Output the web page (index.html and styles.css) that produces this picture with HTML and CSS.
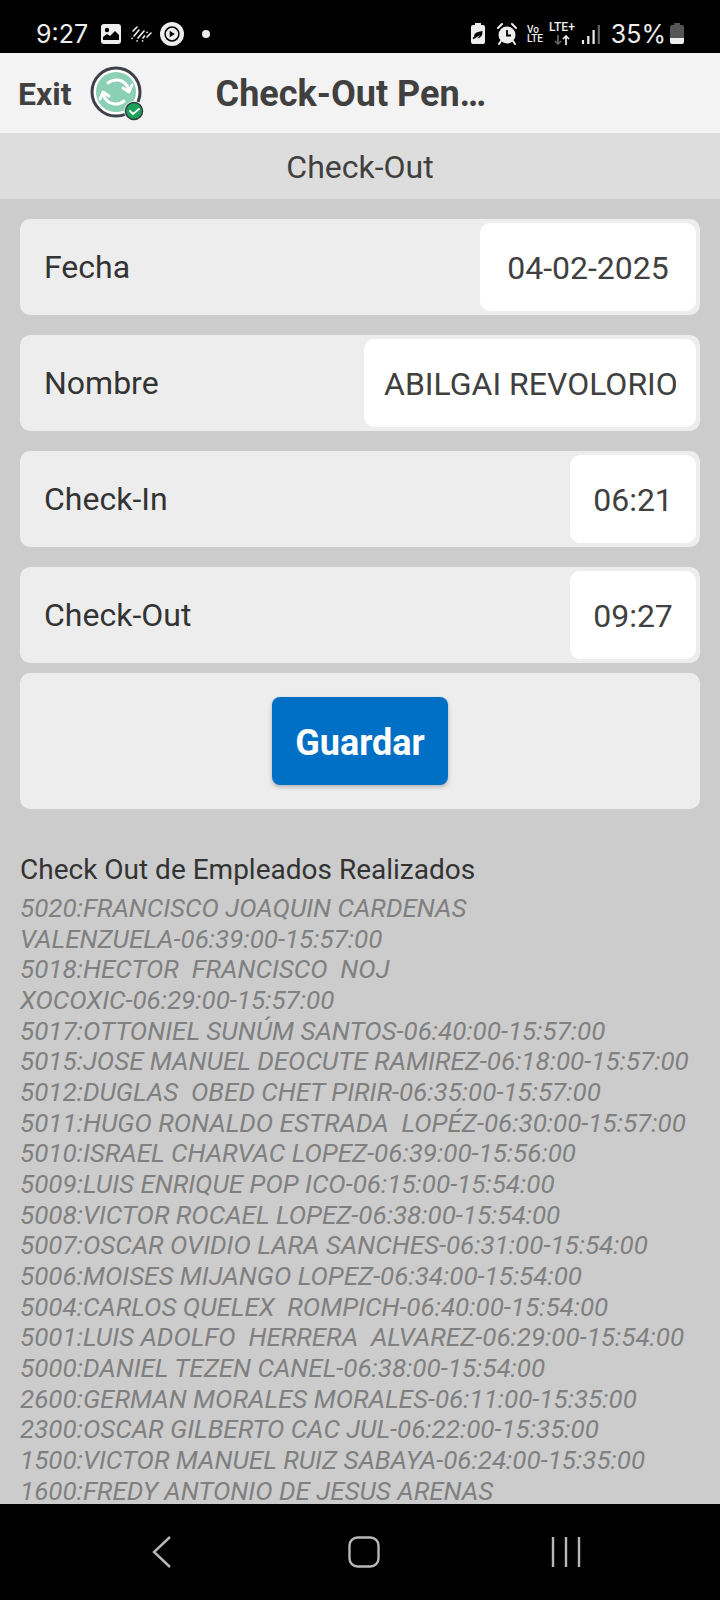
FILE: index.html
```html
<!DOCTYPE html>
<html lang="es">
<head>
<meta charset="utf-8">
<meta name="viewport" content="width=device-width, initial-scale=1">
<title>Check-Out</title>
<link rel="stylesheet" href="styles.css">
</head>
<body>
<div class="status">
  <div class="status-group">
    <span class="clock">9:27</span>
    <svg class="picture-icon" width="22" height="22" viewBox="0 0 22 22"><rect x="1" y="1" width="20" height="20" rx="3" fill="#eee"/><circle cx="7" cy="7" r="2.2" fill="#000"/><path d="M3 17v-3l4-3 3 2 5-5 4 4v5z" fill="#000"/></svg>
    <svg class="rays-icon" width="22" height="18" viewBox="0 0 22 18" stroke="#eee" stroke-width="1.600" stroke-linecap="round" fill="none"><path d="M3 6l4-4M2 13.500l.1-.1M4 11l5-6M8 13l6-7M13 13l1.500-2M17 7.500l.1-.1M12.500 16l.1-.1M17 12l4-4M7 16l.1-.1"/></svg>
    <svg width="24" height="24" viewBox="0 0 26 26"><circle cx="13" cy="13" r="13" fill="#eee"/><circle cx="13" cy="13" r="7.500" fill="none" stroke="#000" stroke-width="1.600"/><path d="M10.500 9.500v7l5.500-3.500z" fill="#000"/></svg>
    <span class="dot"></span>
  </div>
  <div class="status-group status-right">
    <svg width="16" height="22" viewBox="0 0 16 22"><path d="M5 0h6v2h2q2 0 2 2v15q0 2-2 2H3q-2 0-2-2V4q0-2 2-2h2z" fill="#eee"/><path d="M3 15.500L10 11" stroke="#000" stroke-width="1.500"/><path d="M4 13q0-4 8.500-5 .5 7-5.500 7.500 2-1 3-4-2 2-5 3z" fill="#000"/></svg>
    <svg class="alarm-icon" width="20" height="22" viewBox="0 0 20 22"><circle cx="10" cy="12" r="8.500" fill="#eee"/><path d="M1 5l4-4M19 5l-4-4M4 18l-2 3M16 18l2 3" stroke="#eee" stroke-width="2" stroke-linecap="round"/><path d="M10 7v5.500h4" fill="none" stroke="#000" stroke-width="1.800"/></svg>
    <span class="volte"><span>Vo</span><span>LTE</span></span>
    <span class="lte"><span>LTE+</span><svg width="16" height="10" viewBox="0 0 16 10" fill="none" stroke-width="1.700"><path d="M4 0v9M1 6l3 3 3-3" stroke="#666"/><path d="M12 10V1M9 4l3-3 3 3" stroke="#eee"/></svg></span>
    <svg class="signal" width="20" height="20" viewBox="0 0 20 20" stroke-width="2.200"><path d="M2 20v-4M7.300 20v-8M12.600 20V6" stroke="#eee"/><path d="M17.800 20V1" stroke="#666"/></svg>
    <span class="charge"><span class="percent">35%</span>
    <svg width="14" height="22" viewBox="0 0 14 22"><path d="M4 0h6v2h2q2 0 2 2v11H0V4q0-2 2-2h2z" fill="#555"/><path d="M0 15h14v4q0 2-2 2H2q-2 0-2-2z" fill="#eee"/></svg></span>
  </div>
</div>
<header class="topbar">
  <button class="exit" type="button">Exit</button>
  <button class="sync" type="button" aria-label="Sync">
    <svg width="56" height="56" viewBox="0 0 56 56" fill="none"><circle cx="26" cy="26" r="24" fill="#fff" stroke="#3d4049" stroke-width="3"/><circle cx="26" cy="26" r="20" fill="#8bcfb7"/><path d="M17 17.500q5-4 11-3.500 8 1 11 10M35 34.500q-5 4-11 3.500-8-1-11-10" stroke="#fff" stroke-width="3"/><path d="M33 22l6 4 3-7M19 30l-6-4-3 7" stroke="#fff" stroke-width="3" stroke-linecap="round" stroke-linejoin="round"/><circle cx="44" cy="45" r="10" fill="#f3f3f3"/><circle cx="44" cy="45" r="8.500" fill="#1da05a" stroke="#303b3c" stroke-width="1.500"/><path d="M40 45l3 3 6-5" stroke="#fff" stroke-width="1.800" stroke-linecap="round"/></svg>
  </button>
  <h1 class="title">Check-Out Pen…</h1>
</header>
<h2 class="subtitle">Check-Out</h2>
<main class="content">
  <form class="form">
    <div class="field"><label for="fecha">Fecha</label><input class="date" id="fecha" type="text" value="04-02-2025"></div>
    <div class="field"><label for="nombre">Nombre</label><input class="name" id="nombre" type="text" value="ABILGAI REVOLORIO"></div>
    <div class="field"><label for="entrada">Check-In</label><input class="time" id="entrada" type="text" value="06:21"></div>
    <div class="field"><label for="salida">Check-Out</label><input class="time" id="salida" type="text" value="09:27"></div>
    <div class="actions"><button class="save" type="button">Guardar</button></div>
  </form>
  <section class="history">
    <h3 class="history-title">Check Out de Empleados Realizados</h3>
    <ul class="history-list">
      <li>5020:FRANCISCO JOAQUIN CARDENAS
VALENZUELA-06:39:00-15:57:00</li>
      <li>5018:HECTOR  FRANCISCO  NOJ
XOCOXIC-06:29:00-15:57:00</li>
      <li>5017:OTTONIEL SUNÚM SANTOS-06:40:00-15:57:00</li>
      <li>5015:JOSE MANUEL DEOCUTE RAMIREZ-06:18:00-15:57:00</li>
      <li>5012:DUGLAS  OBED CHET PIRIR-06:35:00-15:57:00</li>
      <li>5011:HUGO RONALDO ESTRADA  LOPÉZ-06:30:00-15:57:00</li>
      <li>5010:ISRAEL CHARVAC LOPEZ-06:39:00-15:56:00</li>
      <li>5009:LUIS ENRIQUE POP ICO-06:15:00-15:54:00</li>
      <li>5008:VICTOR ROCAEL LOPEZ-06:38:00-15:54:00</li>
      <li>5007:OSCAR OVIDIO LARA SANCHES-06:31:00-15:54:00</li>
      <li>5006:MOISES MIJANGO LOPEZ-06:34:00-15:54:00</li>
      <li>5004:CARLOS QUELEX  ROMPICH-06:40:00-15:54:00</li>
      <li>5001:LUIS ADOLFO  HERRERA  ALVAREZ-06:29:00-15:54:00</li>
      <li>5000:DANIEL TEZEN CANEL-06:38:00-15:54:00</li>
      <li>2600:GERMAN MORALES MORALES-06:11:00-15:35:00</li>
      <li>2300:OSCAR GILBERTO CAC JUL-06:22:00-15:35:00</li>
      <li>1500:VICTOR MANUEL RUIZ SABAYA-06:24:00-15:35:00</li>
      <li>1600:FREDY ANTONIO DE JESUS ARENAS</li>
    </ul>
  </section>
</main>
<nav class="navbar">
  <button type="button" aria-label="Atrás"><svg width="32" height="32" viewBox="0 0 32 32"><path d="M24 1L8 16l16 15" fill="none" stroke="#b8b8b8" stroke-width="2.400"/></svg></button>
  <button type="button" aria-label="Inicio"><svg width="32" height="32" viewBox="0 0 32 32"><rect x="1.500" y="1.500" width="29" height="29" rx="8" fill="none" stroke="#b8b8b8" stroke-width="2.400"/></svg></button>
  <button type="button" aria-label="Recientes"><svg width="32" height="32" viewBox="0 0 32 32"><path d="M3 1v30M16 1v30M29 1v30" stroke="#b8b8b8" stroke-width="2.400"/></svg></button>
</nav>
</body>
</html>
```

FILE: styles.css
```css
* { box-sizing: border-box; }
body {
  margin: 0;
  height: 100vh;
  display: flex;
  flex-direction: column;
  background: #ccc;
  color: #333;
  font-family: Roboto, sans-serif;
}
h1, h2, h3, ul { margin: 0; padding: 0; }
button { border: 0; padding: 0; background: none; font: inherit; color: inherit; }
svg { display: block; flex: none; }

.status {
  flex: none;
  display: flex;
  justify-content: space-between;
  height: 53px;
  padding: 16px 36px 0;
  background: #000;
  color: #eee;
}
.status-group { display: flex; align-items: center; height: 36px; gap: 8px; }
.status-right { gap: 6px; }
.clock, .percent { font-family: Inter, sans-serif; font-size: 25px; }
.clock { margin-right: 4px; }
.dot { width: 8px; height: 8px; margin-left: 10px; border-radius: 50%; background: #eee; }
.alarm-icon { margin: 0 4px 0 5px; }
.signal { margin-right: 4px; }
.charge { display: flex; align-items: center; gap: 4px; }
.volte, .lte { display: flex; flex-direction: column; align-items: flex-start; font-size: 10px; line-height: 9px; font-weight: 500; }
.lte { align-items: center; gap: 3px; font-size: 12px; }

.topbar {
  flex: none;
  display: flex;
  align-items: center;
  height: 80px;
  padding: 2px 18px 0;
  background: #f3f3f3;
  color: #404040;
}
.exit { font-size: 32px; font-weight: 700; }
.sync { margin-left: 18px; }
.title {
  margin-left: 70px;
  white-space: nowrap;
  font-size: 36px;
  font-weight: 700;
}
.subtitle {
  flex: none;
  padding-top: 2px;
  background: #ddd;
  color: #404040;
  text-align: center;
  font-size: 32px;
  font-weight: 400;
  line-height: 64px;
}

.content { flex: 1; min-height: 0; overflow: hidden; padding: 20px 20px 0; }
.form { display: flex; flex-direction: column; gap: 20px; }
.field {
  display: flex;
  align-items: center;
  justify-content: space-between;
  height: 96px;
  padding: 0 4px 0 24px;
  border-radius: 10px;
  background: #ededed;
  font-size: 32px;
}
.field input {
  height: 88px;
  padding: 2px 20px 0;
  border: 0;
  border-radius: 10px;
  background: #fff;
  color: #404040;
  font: inherit;
}
.field .date { width: 216px; text-align: center; }
.field .name { width: 332px; }
.field .time { width: 126px; text-align: center; }
.actions {
  display: flex;
  justify-content: center;
  margin-top: -10px;
  padding: 24px;
  border-radius: 10px;
  background: #ededed;
}
.save {
  height: 88px;
  padding: 4px 23px 0;
  border-radius: 8px;
  background: #0070c6;
  color: #fff;
  font-size: 36px;
  font-weight: 700;
  box-shadow: 0 2px 4px rgba(0, 0, 0, 0.25);
}

.history { padding-top: 42px; }
.history-title { font-size: 28px; font-weight: 400; line-height: 38px; }
.history-list {
  margin-top: 4px;
  list-style: none;
  color: #808080;
  font-size: 26px;
  font-style: italic;
  line-height: 1.18;
}
.history-list li { white-space: pre-wrap; }

.navbar {
  flex: none;
  display: flex;
  justify-content: space-around;
  align-items: center;
  height: 96px;
  padding: 0 53px 0 61px;
  background: #000;
}
```
